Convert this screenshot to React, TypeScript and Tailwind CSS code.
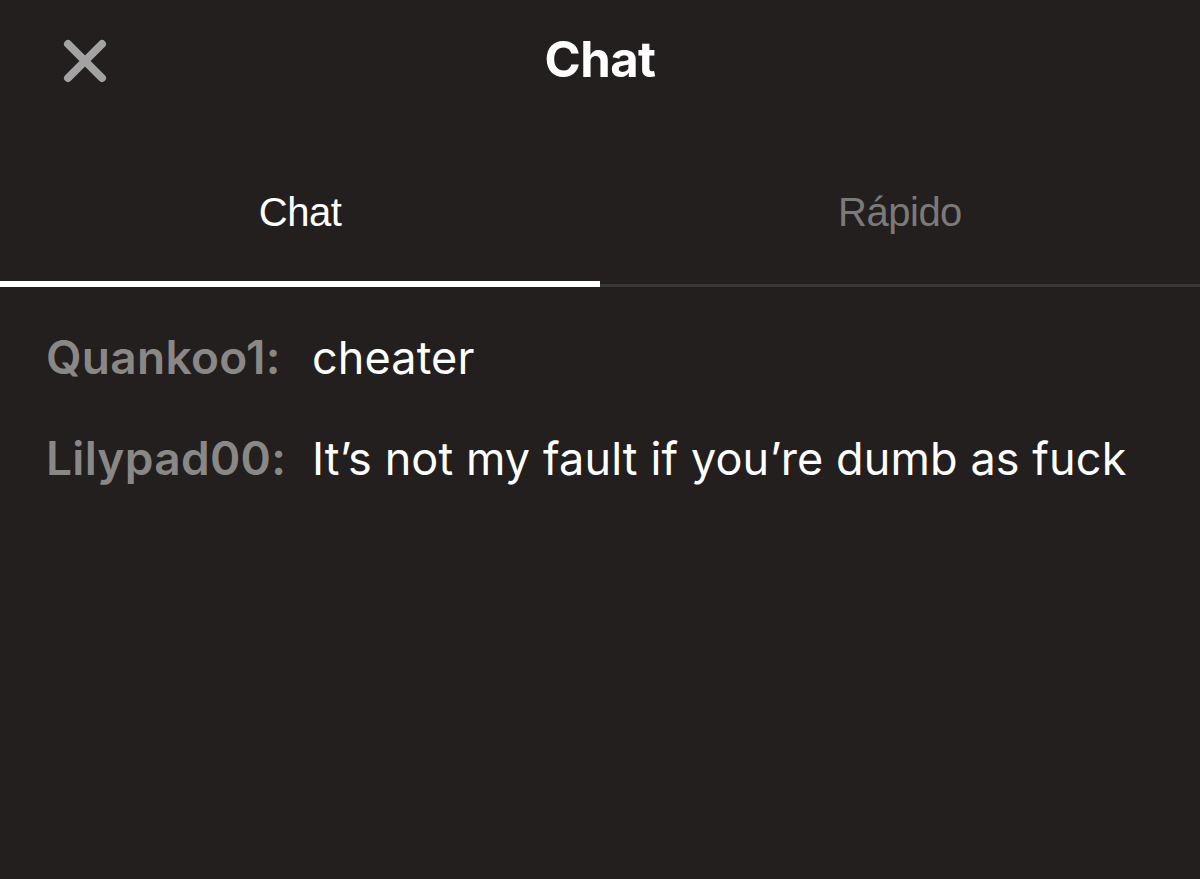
export default function App() {
  const messages = [
    { name: 'Quankoo1:', text: 'cheater' },
    { name: 'Lilypad00:', text: 'It’s not my fault if you’re dumb as fuck' },
  ];

  return (
    <div className="w-[1200px] h-[879px] bg-[#221f1e] flex flex-col font-['Inter',sans-serif]">
      {/* Header */}
      <div className="relative h-[122px] flex items-center justify-center">
        <button className="absolute left-[60px] top-[38px] w-[50px] h-[46px] flex items-center justify-center">
          <svg width="46" height="44" viewBox="0 0 46 44">
            <path d="M6 5 L40 39 M40 5 L6 39" stroke="#a3a3a3" strokeWidth="8" strokeLinecap="round" />
          </svg>
        </button>
        <h1 className="text-white text-[49px] font-bold tracking-[-0.5px] -mt-[2px]">Chat</h1>
      </div>

      {/* Tabs */}
      <div className="flex font-['Liberation_Sans',sans-serif] text-[40px] border-b-[3px] border-[#3a3838]">
        <div className="flex-1 flex flex-col items-center">
          <span className="text-white pt-[68px] h-[159px] leading-[44px] tracking-[-0.5px]">Chat</span>
          <div className="self-stretch h-[6px] bg-white -mb-[3px]" />
        </div>
        <div className="flex-1 flex flex-col items-center">
          <span className="text-[#7c7a79] pt-[68px] h-[159px] leading-[44px] tracking-[-0.5px]">Rápido</span>
        </div>
      </div>

      {/* Messages */}
      <div className="flex flex-col pl-[46px] pt-[43px] gap-[46px]">
        {messages.map((m) => (
          <div key={m.name} className="flex items-baseline leading-[54px]">
            <span className="w-[266px] text-[46px] text-[#8a8887] font-semibold tracking-[0.3px]">{m.name}</span>
            <span className="text-[45px] text-white tracking-[0.1px]">{m.text}</span>
          </div>
        ))}
      </div>
    </div>
  );
}
